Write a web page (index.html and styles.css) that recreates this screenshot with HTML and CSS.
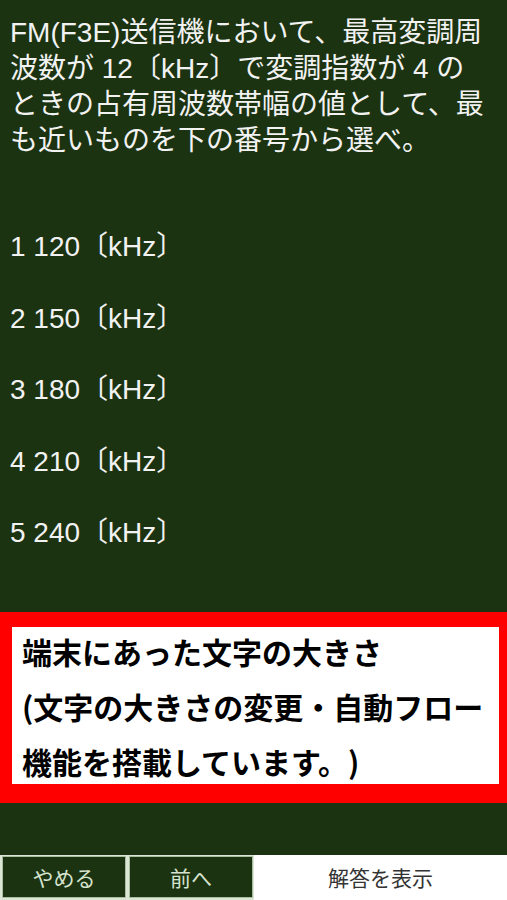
FILE: index.html
```html
<!DOCTYPE html>
<html lang="ja">
<head>
<meta charset="utf-8">
<title>問題</title>
<link rel="stylesheet" href="styles.css">
</head>
<body>
<main class="screen">
  <section class="content">
    <p class="question">FM(F3E)送信機において、最高変調周<br>波数が 12〔kHz〕で変調指数が 4 の<br>ときの占有周波数帯幅の値として、最<br>も近いものを下の番号から選べ。</p>
    <ol class="options">
      <li class="option">1 120〔kHz〕</li>
      <li class="option">2 150〔kHz〕</li>
      <li class="option">3 180〔kHz〕</li>
      <li class="option">4 210〔kHz〕</li>
      <li class="option">5 240〔kHz〕</li>
    </ol>
    <div class="notice">
      <p class="notice-text">端末にあった文字の大きさ<br>(文字の大きさの変更・自動フロー<br>機能を搭載しています。)</p>
    </div>
  </section>
  <nav class="toolbar">
    <button class="btn btn-dark">やめる</button>
    <button class="btn btn-dark">前へ</button>
    <button class="btn btn-light">解答を表示</button>
  </nav>
</main>
</body>
</html>
```
FILE: styles.css
```css
html, body {
  margin: 0;
  padding: 0;
}
body {
  background: #1c3311;
  font-family: "Liberation Sans", "Noto Sans CJK JP", sans-serif;
  text-spacing-trim: space-all;
}
.screen {
  display: flex;
  flex-direction: column;
  height: 900px;
  width: 507px;
}
.content {
  flex: 1;
}
.question {
  margin: 0;
  padding: 15px 0 0 10px;
  font-size: 28px;
  line-height: 36px;
  color: #f2f2f2;
  white-space: nowrap;
}
.options {
  list-style: none;
  margin: 52px 0 0;
  padding: 0 0 0 10px;
}
.option {
  font-size: 28px;
  line-height: 71.5px;
  height: 71.5px;
  color: #f2f2f2;
  white-space: nowrap;
}
.notice {
  margin-top: 43.5px;
  background: #ffffff;
  border-style: solid;
  border-color: #ff0000;
  border-width: 15px 8px 19px 12px;
  height: 157px;
  box-sizing: content-box;
}
.notice-text {
  margin: -3px 0 0;
  padding-left: 10px;
  font-family: "Noto Sans CJK JP", sans-serif;
  font-weight: 700;
  font-size: 30px;
  line-height: 55px;
  color: #000;
  white-space: nowrap;
}
.toolbar {
  display: flex;
  height: 45px;
  box-sizing: border-box;
  padding: 1px 0 2px 2px;
  gap: 3px;
  background: #dbe6d6;
}
.btn {
  margin: 0;
  font-family: "Noto Sans CJK JP", sans-serif;
  font-size: 21px;
  line-height: 1;
  padding: 0;
  cursor: pointer;
}
.btn-dark {
  width: 124px;
  background: #1c3311;
  color: #d6e4cf;
  border: 1px solid #a9bda1;
}
.btn-light {
  flex: 1;
  margin: -1px 0 -2px -2px;
  background: #ffffff;
  color: #333333;
  border: none;
}
```
